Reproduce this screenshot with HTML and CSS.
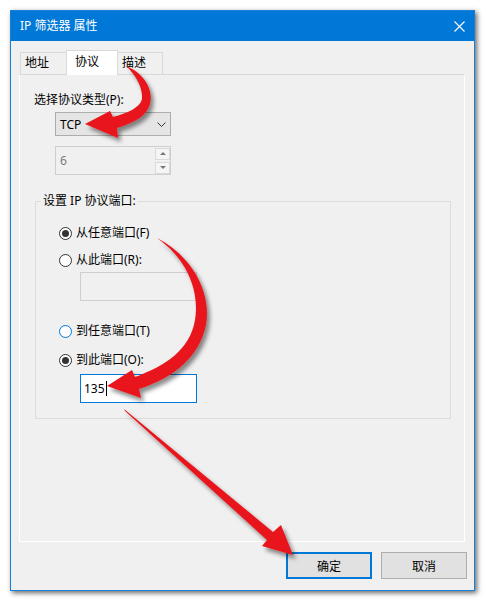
FILE: index.html
```html
<!DOCTYPE html>
<html lang="zh-CN">
<head>
    <meta charset="UTF-8">
    <meta name="viewport" content="width=device-width, initial-scale=1.0">
    <title>IP 筛选器 属性</title>
    <link rel="stylesheet" href="styles.css">
</head>
<body>
    <div class="window">
        <div class="titlebar">
            <span class="title">IP 筛选器 属性</span>
            <svg class="close" width="11" height="11" viewBox="0 0 11 11">
                <path d="M0.5 0.5L10.5 10.5M10.5 0.5L0.5 10.5" stroke="#fff" stroke-width="1.1" fill="none"/>
            </svg>
        </div>

        <div class="client">
            <div class="tabs">
                <div class="tab first">地址</div>
                <div class="tab active">协议</div>
                <div class="tab last">描述</div>
            </div>

            <div class="panel">
                <div class="field-label">选择协议类型(P):</div>

                <div class="combo">
                    <span>TCP</span>
                    <svg width="9" height="5" viewBox="0 0 9 5">
                        <path d="M0.5 0.5L4.5 4.5L8.5 0.5" stroke="#333" stroke-width="1" fill="none"/>
                    </svg>
                </div>

                <div class="spin">
                    <span>6</span>
                    <div class="spin-btns">
                        <div class="spin-btn"><span class="tri up"></span></div>
                        <div class="spin-btn"><span class="tri down"></span></div>
                    </div>
                </div>

                <div class="group">
                    <div class="group-title">设置 IP 协议端口:</div>

                    <div class="radio on first-row"><span class="mark"></span>从任意端口(F)</div>
                    <div class="radio row-2"><span class="mark"></span>从此端口(R):</div>
                    <div class="textbox disabled"></div>
                    <div class="radio hover row-3"><span class="mark"></span>到任意端口(T)</div>
                    <div class="radio on row-4"><span class="mark"></span>到此端口(O):</div>
                    <div class="textbox focused">135<span class="caret"></span></div>
                </div>
            </div>

            <div class="buttons">
                <button class="btn default">确定</button>
                <button class="btn">取消</button>
            </div>
        </div>
    </div>

    <!-- red callout arrows drawn over the dialog -->
    <svg class="arrows" width="486" height="602" viewBox="0 0 486 602">
        <defs>
            <filter id="shadow" x="-20%" y="-20%" width="140%" height="140%">
                <feDropShadow dx="3" dy="4" stdDeviation="2.2" flood-color="#000" flood-opacity="0.45"/>
            </filter>
        </defs>
        <g fill="#e8151b" filter="url(#shadow)">
            <path d="M126 66 C142 72 154 88 150 104 C147 116 134 123 117 128 L118 138 L85 124 L110 111 L113 117 C127 113 140 108 142 99 C143 88 136 75 126 66 Z"/>
            <path d="M157 238 C190 255 212 290 206 325 C200 355 176 377 139 389 L141 398 L107 386 L132 370 L135 377 C165 366 190 350 195 320 C200 290 186 258 157 238 Z"/>
            <path d="M124 409 L273 532 L281 525 L293 555 L262 546 L267 540 L125 411 Z"/>
        </g>
    </svg>
</body>
</html>
```

FILE: styles.css
```css
body {
    margin: 0;
    padding: 10px 0 0 10px;
    width: 486px;
    height: 602px;
    box-sizing: border-box;
    position: relative;
    overflow: hidden;
    background-color: #fff;
    font-family: "Noto Sans", "Noto Sans CJK SC", sans-serif;
    font-size: 12px;
    color: #000;
}
.window {
    width: 465px;
    height: 581px;
    box-sizing: border-box;
    border: 1px solid #1a7fd6;
    background-color: #f0f0f0;
    box-shadow: 2px 2px 5px rgba(0,0,0,0.6);
    display: flex;
    flex-direction: column;
}
.titlebar {
    height: 30px;
    flex-shrink: 0;
    background-color: #0078d7;
    color: white;
    display: flex;
    align-items: center;
    justify-content: space-between;
    padding: 0 9px 0 9px;
    line-height: 16px;
}
.client {
    flex: 1;
    padding: 9px 9px 0 8px;
    display: flex;
    flex-direction: column;
}
.tabs {
    display: flex;
    align-items: flex-end;
    height: 24px;
    padding-left: 1px;
}
.tab {
    height: 22px;
    box-sizing: border-box;
    border: 1px solid #d9d9d9;
    border-bottom: none;
    background-color: #f0f0f0;
    padding-left: 4px;
    line-height: 20px;
}
.tab.first {
    width: 47px;
}
.tab.last {
    width: 46px;
    margin-left: -1px;
}
.tab.active {
    width: 52px;
    height: 25px;
    margin-left: -1px;
    margin-bottom: -1px;
    padding-left: 8px;
    line-height: 22px;
    background-color: #fff;
    position: relative;
    z-index: 1;
}
.panel {
    height: 468px;
    box-sizing: border-box;
    border: 1px solid #fff;
    border-top-color: #d9d9d9;
    padding: 17px 0 0 14px;
}
.field-label {
    line-height: 16px;
}
.combo {
    margin: 4px 0 0 21px;
    width: 116px;
    height: 24px;
    box-sizing: border-box;
    border: 1px solid #adadad;
    background-color: #e5e5e5;
    display: flex;
    align-items: center;
    justify-content: space-between;
    padding: 0 4px 0 4px;
}
.spin {
    margin: 10px 0 0 21px;
    width: 116px;
    height: 29px;
    box-sizing: border-box;
    border: 1px solid #cfcfcf;
    display: flex;
    align-items: center;
    justify-content: space-between;
    padding: 0 0 0 4px;
    color: #7a7a7a;
}
.spin-btns {
    display: flex;
    flex-direction: column;
    gap: 2px;
}
.spin-btn {
    width: 15px;
    height: 12px;
    box-sizing: border-box;
    border: 1px solid #dadada;
    background-color: #f5f5f5;
    display: flex;
    align-items: center;
    justify-content: center;
}
.tri {
    width: 0;
    height: 0;
    border-left: 3px solid transparent;
    border-right: 3px solid transparent;
}
.tri.up {
    border-bottom: 3px solid #777;
}
.tri.down {
    border-top: 3px solid #777;
}
.group {
    margin: 26px 0 0 1px;
    width: 416px;
    height: 218px;
    box-sizing: border-box;
    border: 1px solid #dcdcdc;
    padding-left: 23px;
}
.group-title {
    width: max-content;
    margin: -9px 0 0 -18px;
    padding: 0 2px;
    line-height: 16px;
    background-color: #f0f0f0;
}
.radio {
    display: flex;
    align-items: center;
    gap: 4px;
    height: 16px;
    line-height: 16px;
}
.radio .mark {
    width: 13px;
    height: 13px;
    box-sizing: border-box;
    border: 1px solid #333;
    border-radius: 50%;
    background-color: #fff;
    display: flex;
    align-items: center;
    justify-content: center;
}
.radio.on .mark::after {
    content: "";
    width: 7px;
    height: 7px;
    border-radius: 50%;
    background-color: #333;
}
.radio.hover .mark {
    border-color: #0078d7;
}
.first-row {
    margin-top: 16px;
}
.row-2 {
    margin-top: 11px;
}
.row-3 {
    margin-top: 22px;
}
.row-4 {
    margin-top: 13px;
}
.textbox {
    margin: 4px 0 0 21px;
    width: 117px;
    height: 29px;
    box-sizing: border-box;
    padding-left: 3px;
    display: flex;
    align-items: center;
}
.textbox.disabled {
    border: 1px solid #cfcfcf;
    background-color: #f0f0f0;
}
.textbox.focused {
    margin-top: 6px;
    border: 1px solid #0078d7;
    background-color: #fff;
}
.caret {
    width: 1px;
    height: 15px;
    margin-left: 1px;
    background-color: #000;
}
.buttons {
    display: flex;
    justify-content: flex-end;
    gap: 9px;
    margin: 10px -2px 0 0;
}
.btn {
    width: 86px;
    height: 27px;
    box-sizing: border-box;
    border: 1px solid #adadad;
    background-color: #e1e1e1;
    font: inherit;
    color: #000;
    padding: 0;
}
.btn.default {
    border: 2px solid #0078d7;
}
.arrows {
    position: absolute;
    top: 0;
    left: 0;
    pointer-events: none;
}
```
